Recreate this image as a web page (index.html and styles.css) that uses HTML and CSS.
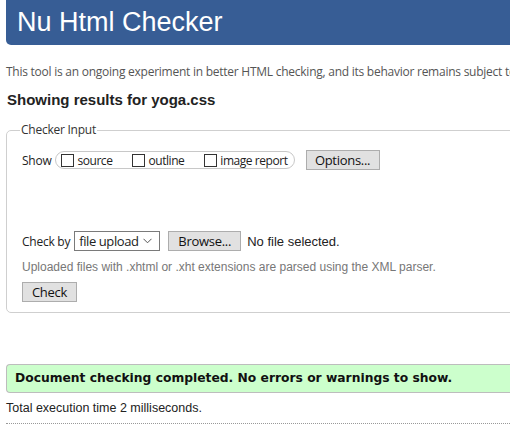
FILE: index.html
```html
<!DOCTYPE html>
<html lang="en">
<head>
<meta charset="utf-8">
<title>Nu Html Checker</title>
<link rel="stylesheet" href="styles.css">
</head>
<body>
<div class="page">
  <header class="masthead"><h1>Nu Html Checker</h1></header>
  <p class="intro">This tool is an ongoing experiment in better HTML checking, and its behavior remains subject to change</p>
  <h2 class="results-title">Showing results for yoga.css</h2>
  <fieldset class="checker">
    <legend>Checker Input</legend>
    <div class="row show-row">
      <span class="label">Show</span>
      <span class="pill">
        <label class="opt"><input type="checkbox"><span>source</span></label>
        <label class="opt"><input type="checkbox"><span>outline</span></label>
        <label class="opt"><input type="checkbox"><span>image report</span></label>
      </span>
      <button class="btn btn-options" type="button">Options...</button>
    </div>
    <div class="row checkby-row">
      <span class="label">Check by</span>
      <span class="select"><span>file upload</span>
        <svg class="chev" width="9" height="6" viewBox="0 0 9 6"><path d="M0.5 0.8 L4.5 4.8 L8.5 0.8" fill="none" stroke="#555" stroke-width="1"/></svg>
      </span>
      <button class="btn btn-browse" type="button">Browse...</button>
      <span class="nofile">No file selected.</span>
    </div>
    <p class="hint">Uploaded files with .xhtml or .xht extensions are parsed using the XML parser.</p>
    <button class="btn btn-check" type="button">Check</button>
  </fieldset>
  <p class="success">Document checking completed. No errors or warnings to show.</p>
  <p class="stats">Total execution time 2 milliseconds.</p>
  <hr class="dotted">
</div>
</body>
</html>
```
FILE: styles.css
```css
html { overflow: hidden; }
body { margin: 0; background: #fff; }
.page { width: 700px; padding-left: 6px; font-family: "Open Sans", "Noto Sans", sans-serif; color: #222; }

.masthead { background: #375d95; height: 45px; border-radius: 0 0 0 5px; padding-left: 11px; }
.masthead h1 { margin: 0; font: 400 27px/45px "Liberation Sans", Arial, sans-serif; color: #fff; }

.intro { margin: 19px 0 0; font-size: 12px; line-height: 16px; color: #555; white-space: nowrap; letter-spacing: -0.25px; }

.results-title { margin: 11px 0 0 1px; font: 700 15px/18px "Liberation Sans", Arial, sans-serif; color: #222; }

.checker { margin: 13px 0 0; padding: 0 0 10px 15px; border: 1px solid #cfcfcf; border-radius: 5px; }
.checker legend { font-size: 12px; line-height: 16px; padding: 0 1px; margin-left: -2px; color: #333; letter-spacing: -0.25px; }

.row { display: flex; align-items: center; height: 20px; font-size: 12px; color: #222; }
.label { letter-spacing: -0.25px; }
.show-row { margin-top: 12px; }
.show-row .label { margin-right: 4px; }
.pill { display: inline-flex; align-items: center; height: 18px; box-sizing: border-box; border: 1px solid #c8c8c8; border-radius: 9px; padding: 0 6px 0 5px; }
.opt { display: inline-flex; align-items: center; letter-spacing: -0.45px; }
.opt + .opt { margin-left: 20px; }
.opt input { appearance: none; -webkit-appearance: none; width: 13px; height: 13px; margin: 0 3px 0 0; border: 1px solid #333; background: #fff; border-radius: 0; }

.btn { height: 20px; box-sizing: border-box; border: 1px solid #adadad; background: #e1e1e1; font: 13px/18px "Open Sans", "Noto Sans", sans-serif; color: #111; padding: 0; letter-spacing: -0.3px; }
.btn-options { width: 74px; margin-left: 11px; }

.checkby-row { margin-top: 61px; }
.checkby-row .label { margin-right: 4px; }
.select { display: inline-flex; align-items: center; justify-content: space-between; width: 86px; height: 20px; box-sizing: border-box; border: 1px solid #7a7a7a; padding: 0 7px 0 4px; font-size: 13px; background: #fff; letter-spacing: -0.4px; }
.chev { display: block; }
.btn-browse { width: 73px; margin-left: 8px; }
.nofile { margin-left: 6px; font: 13px "Liberation Sans", Arial, sans-serif; }

.hint { margin: 8px 0 0; font: 12px/16px "Liberation Sans", Arial, sans-serif; color: #777; }
.btn-check { width: 55px; margin-top: 7px; display: block; }

.success { margin: 51px 0 0; height: 29px; box-sizing: border-box; border: 1px solid #bdbdbd; border-right: none; border-radius: 4px 0 0 4px; background: #ccffcc; padding-left: 8px; font: 700 12.3px/27px "DejaVu Sans", Verdana, sans-serif; color: #111; white-space: nowrap; }

.stats { margin: 7px 0 0; font: 12.5px/16px "Liberation Sans", Arial, sans-serif; color: #222; }
.dotted { margin: 7px 0 0; border: none; border-top: 1px dotted #999; height: 0; }
```
